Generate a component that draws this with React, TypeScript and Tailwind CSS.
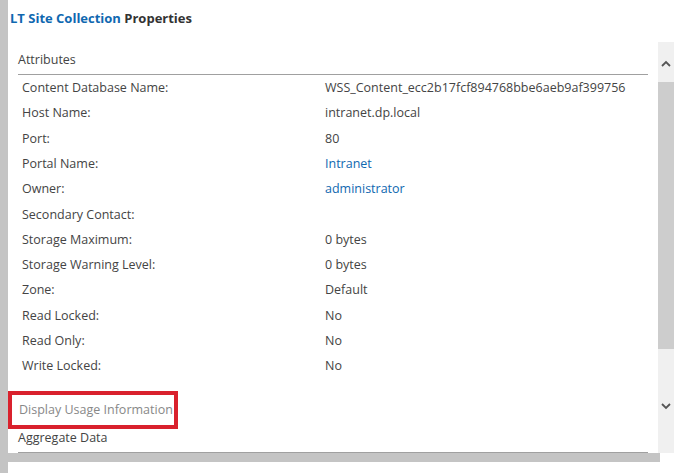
import React from "react";

const rows: [string, string, boolean?][] = [
  ["Content Database Name:", "WSS_Content_ecc2b17fcf894768bbe6aeb9af399756"],
  ["Host Name:", "intranet.dp.local"],
  ["Port:", "80"],
  ["Portal Name:", "Intranet", true],
  ["Owner:", "administrator", true],
  ["Secondary Contact:", ""],
  ["Storage Maximum:", "0 bytes"],
  ["Storage Warning Level:", "0 bytes"],
  ["Zone:", "Default"],
  ["Read Locked:", "No"],
  ["Read Only:", "No"],
  ["Write Locked:", "No"],
];

export default function App() {
  return (
    <div className="w-[674px] h-[473px] overflow-hidden bg-white flex text-[#444] text-[12.5px]" style={{ fontFamily: '"Open Sans", "Noto Sans", sans-serif' }}>
      <div className="w-[8px] h-full bg-[#c4c4c4] shrink-0" />
      <div className="flex-1 flex flex-col">
        <div className="h-[42px] pl-[2px] pt-[9px] text-[13px] font-bold text-[#333]">
          <span className="text-[#0f68b0]">LT Site Collection</span> Properties
        </div>
        <div className="h-[411px] flex">
          <div className="flex-1 flex flex-col pl-[10px] pr-[10px]">
            <div className="pt-[9px] pb-[4px] border-b border-[#a0a0a0] text-[#444]">Attributes</div>
            <div className="flex flex-col pl-[4px] pt-[1px]">
              {rows.map(([k, v, link]) => (
                <div key={k} className="h-[25.3px] flex items-center">
                  <div className="w-[303px]">{k}</div>
                  <div className={link ? "text-[#0f68b0]" : ""}>{v}</div>
                </div>
              ))}
            </div>
            <div className="mt-[12px] -ml-[10px] w-[170px] h-[39px] border-[4px] border-[#d9212d] flex items-center pl-[7px] text-[#888]">
              Display Usage Information
            </div>
            <div className="pt-[0px] pb-[4px] border-b border-[#a0a0a0] text-[#444]">Aggregate Data</div>
          </div>
          <div className="w-[16px] bg-[#f0f0f0] flex flex-col items-center">
            <svg width="12" height="40" viewBox="0 0 12 40" className="mt-[0px]"><path d="M2 24 L6 20 L10 24" stroke="#555" strokeWidth="1.8" fill="none" /></svg>
            <div className="w-[16px] h-[267px] bg-[#cdcdcd]" />
            <svg width="12" height="30" viewBox="0 0 12 30" className="mt-[43px]"><path d="M2 12 L6 16 L10 12" stroke="#555" strokeWidth="1.8" fill="none" /></svg>
          </div>
        </div>
        <div className="h-[9px] bg-[#c4c4c4] mr-[14px]" />
      </div>
    </div>
  );
}
